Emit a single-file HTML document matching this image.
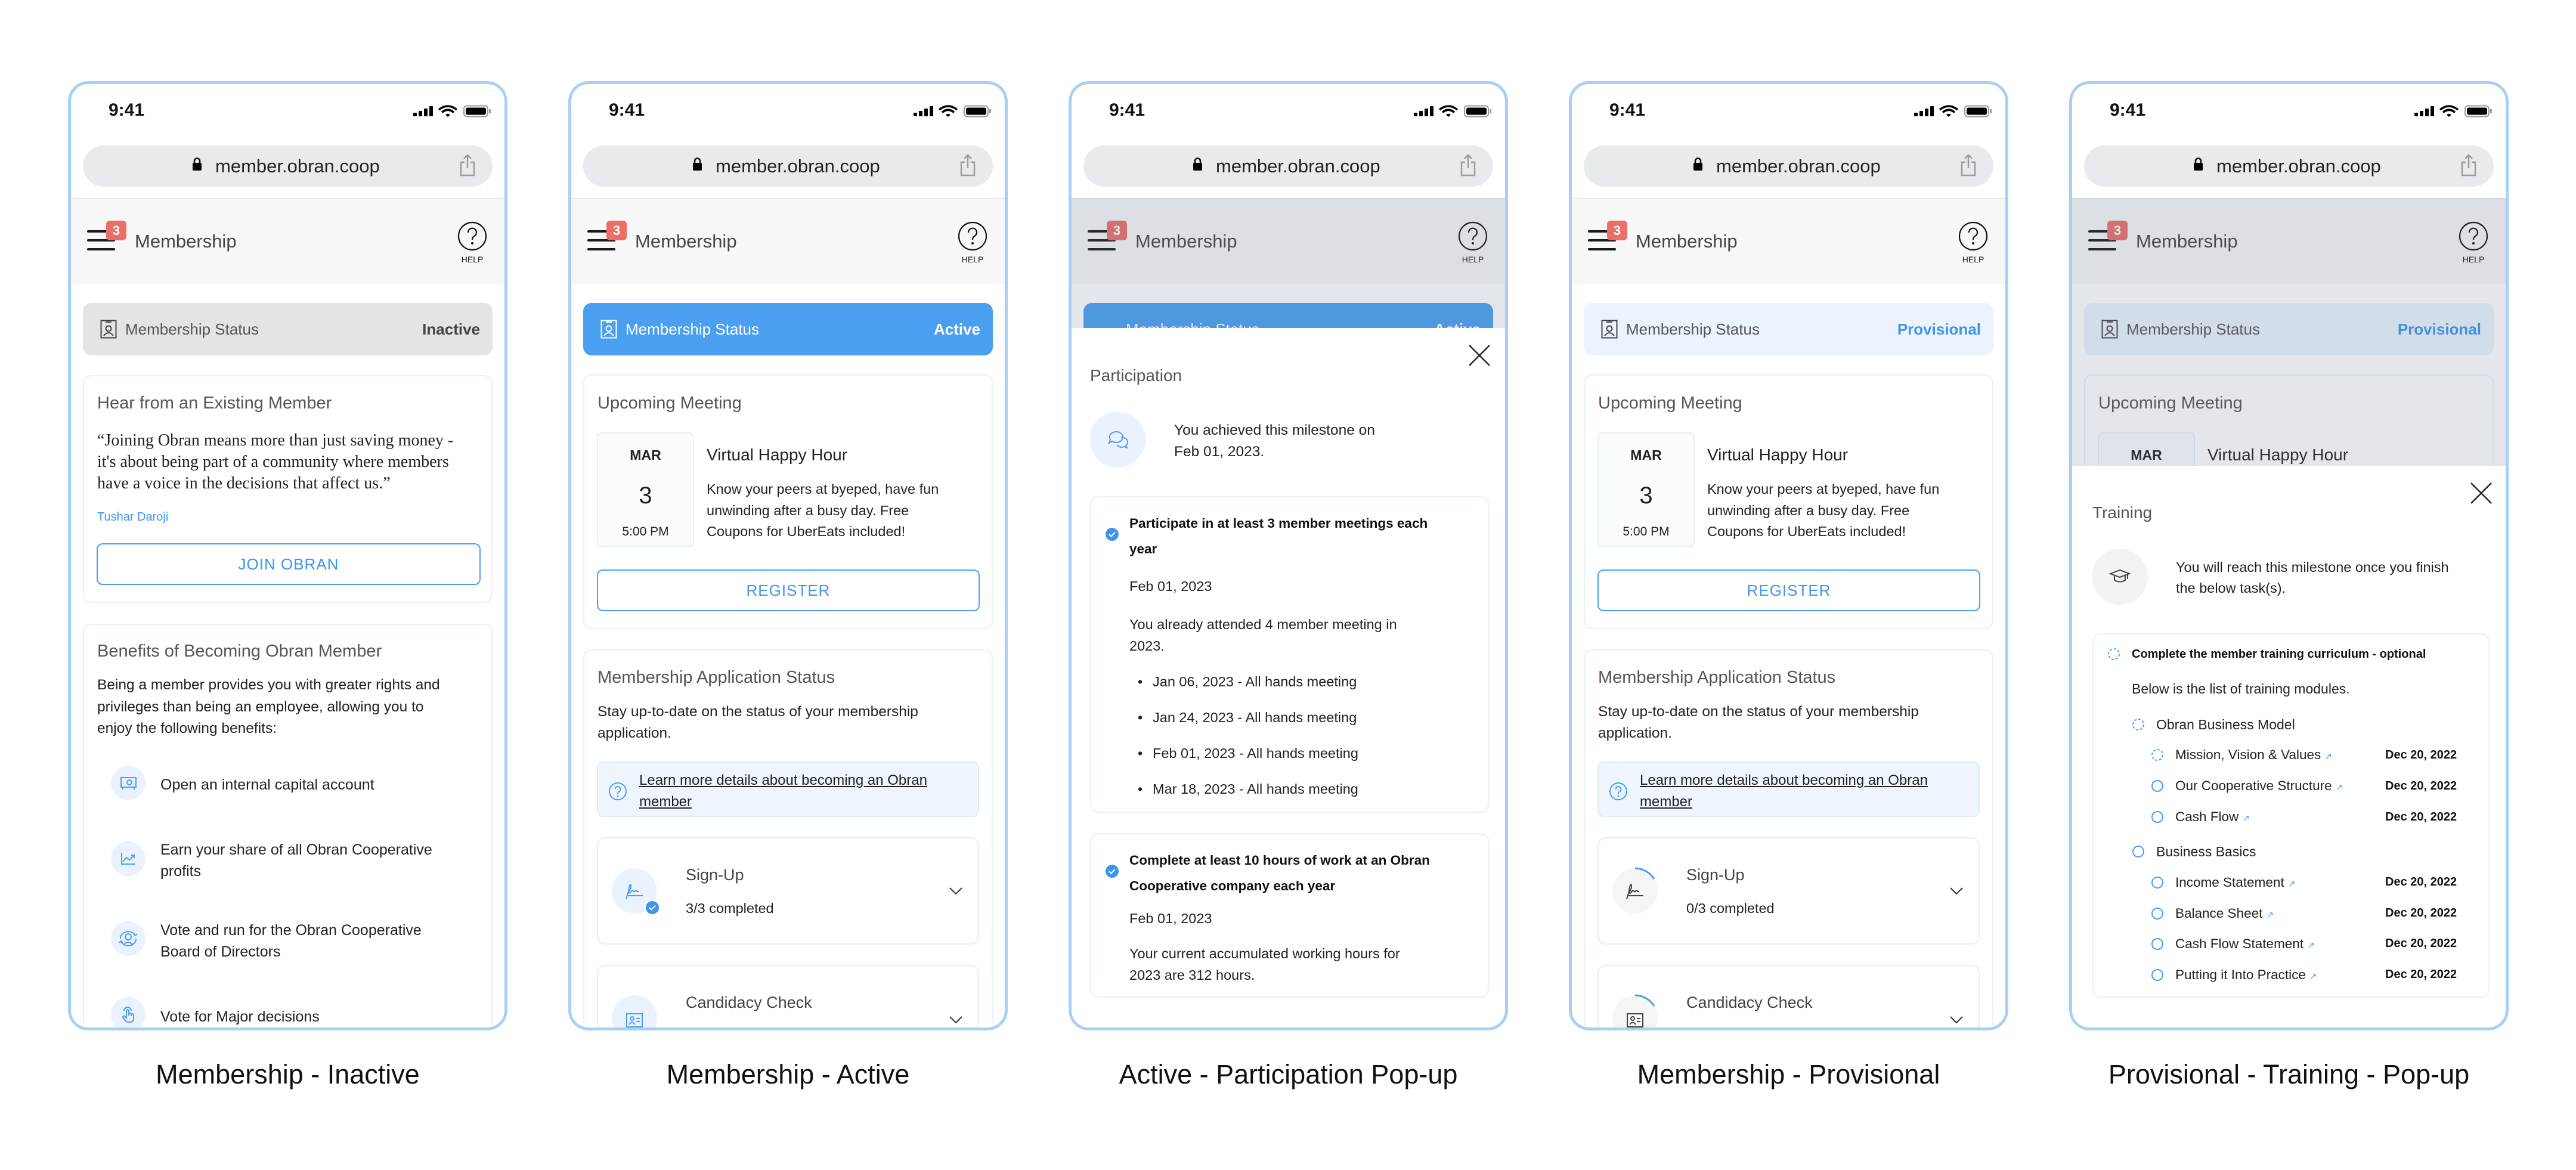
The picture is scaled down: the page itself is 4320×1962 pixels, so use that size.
<!DOCTYPE html>
<html><head><meta charset="utf-8"><style>
*{box-sizing:border-box;margin:0;padding:0}
html{width:4320px;height:1962px;overflow:hidden}
body{width:4320px;height:1962px;background:#fff;position:relative;overflow:hidden;font-family:"Liberation Sans",sans-serif;color:#222}
.ph{position:absolute;top:136px;width:737px;height:1592px;border-radius:34px;overflow:hidden;background:#fff}
.bd{position:absolute;left:0;top:0;width:737px;height:1592px;border:5px solid #a8cff5;border-radius:34px;z-index:50}
.a{position:absolute;white-space:nowrap}
.time{left:68px;top:31px;font-size:30px;line-height:36px;font-weight:bold;color:#111}
.sb{left:579px;top:40px}
.url{left:25px;top:108px;width:687px;height:69px;border-radius:35px;background:#e9eaed}
.urlt{left:247px;top:124px;font-size:31px;line-height:38px;color:#222}
.hdr{left:0;top:196px;width:737px;height:144px;background:#f7f7f7;border-top:2px solid #e8e8e8}
.hb{left:32px;width:47px;height:4px;background:#1a1a1a;border-radius:2px}
.badge{left:64px;top:234px;width:34px;height:33px;background:#ec6e69;border-radius:6px;color:#fff;font-size:22px;font-weight:bold;text-align:center;line-height:33px}
.mtitle{left:112px;top:249px;font-size:31px;line-height:40px;color:#444}
.help{left:653px;top:235px}
.helpt{left:650px;top:291px;width:56px;text-align:center;font-size:14px;line-height:16px;color:#111}
.stat{left:25px;top:372px;width:687px;height:88px;border-radius:14px}
.stt{left:96px;top:401px;font-size:26px;line-height:30px}
.stv{right:46px;top:401px;font-size:26px;line-height:30px;font-weight:bold}
.card{left:25px;width:687px;border:2px solid #e8f0fa;border-radius:14px;background:#fff}
.ct{left:49px;font-size:29px;line-height:36px;color:#555}
.body{font-size:25px;line-height:36px;color:#222}
.btn{left:48px;width:642px;height:70px;border:2px solid #4a9ff0;border-radius:10px;color:#3d95ec;font-size:26px;letter-spacing:1px;text-align:center;line-height:66px}
.ic{border-radius:50%;background:#eaf3fd}
.box{left:48px;width:641px;border:2px solid #e6eef9;border-radius:14px;background:#fff}
.lbl{top:1777px;font-size:45px;line-height:50px;color:#111;text-align:center;width:737px}
.ov{left:0;width:737px;background:rgba(100,120,150,0.18);z-index:20}
.pop{left:0;width:737px;background:#fff;z-index:30}
.b{font-weight:bold}
</style></head><body>

<!-- ================= FRAME 1 ================= -->
<div class="ph" style="left:114px">
<div class="a time">9:41</div>
<svg class="a sb" width="132" height="22" viewBox="0 0 132 22"><rect x="0" y="13" width="6" height="6" rx="1"/><rect x="9" y="10" width="6" height="9" rx="1"/><rect x="18" y="6" width="6" height="13" rx="1"/><rect x="27" y="2" width="6" height="17" rx="1"/><path d="M43 8 Q58 -4 73 8" stroke="#000" stroke-width="3.5" fill="none"/><path d="M48 12.5 Q58 4 68 12.5" stroke="#000" stroke-width="3.5" fill="none"/><path d="M54 16.5 L58 20 L62 16.5 Q58 13 54 16.5Z"/><rect x="85" y="1.5" width="40" height="18" rx="5" fill="none" stroke="#999" stroke-width="2"/><rect x="88" y="4.5" width="34" height="12" rx="3"/><rect x="127" y="7" width="3" height="7" rx="1" fill="#999"/></svg>
<div class="a url"></div>
<svg class="a" style="left:209px;top:128px" width="15" height="22" viewBox="0 0 15 22"><path d="M3 10 V6 a4.5 4.5 0 0 1 9 0 V10" stroke="#111" stroke-width="2.6" fill="none"/><rect x="0" y="9" width="15" height="13" rx="2"/></svg>
<div class="a urlt">member.obran.coop</div>
<svg class="a" style="left:656px;top:122px" width="28" height="38" viewBox="0 0 28 38"><path d="M9 14 H3 V36 H25 V14 H19 M14 24 V2 M8 8 L14 2 L20 8" stroke="#9a9ca0" stroke-width="2.5" fill="none"/></svg>
<div class="a hdr"></div>
<div class="a hb" style="top:250px"></div><div class="a hb" style="top:265px"></div><div class="a hb" style="top:280px"></div>
<div class="a badge">3</div>
<div class="a mtitle">Membership</div>
<svg class="a help" width="50" height="50" viewBox="0 0 50 50"><circle cx="25" cy="25" r="23" stroke="#111" stroke-width="2.2" fill="none"/><path d="M18 19 a7 7 0 1 1 10 6 q-3 2 -3 6" stroke="#111" stroke-width="2.2" fill="none"/><circle cx="25" cy="37" r="2" fill="#111"/></svg>
<div class="a helpt">HELP</div>
<div class="a stat" style="background:#e4e4e4"></div>
<svg class="a" style="left:54px;top:400px" width="28" height="32" viewBox="0 0 28 32"><rect x="1.5" y="1.5" width="25" height="29" stroke="#444" stroke-width="2" fill="none"/><path d="M9 4 H19" stroke="#444" stroke-width="2"/><circle cx="14" cy="15" r="4.5" stroke="#444" stroke-width="2" fill="none"/><path d="M6 27 Q14 17 22 27" stroke="#444" stroke-width="2" fill="none"/></svg>
<div class="a stt" style="color:#555">Membership Status</div>
<div class="a stv" style="color:#444">Inactive</div>

<div class="a card" style="top:493px;height:382px"></div>
<div class="a ct" style="top:522px">Hear from an Existing Member</div>
<div class="a" style="left:49px;top:585px;font-family:'Liberation Serif',serif;font-size:28px;line-height:36px;color:#222">“Joining Obran means more than just saving money -<br>it's about being part of a community where members<br>have a voice in the decisions that affect us.”</div>
<div class="a" style="left:49px;top:718px;font-size:20px;line-height:26px;color:#3d95ec">Tushar Daroji</div>
<div class="a btn" style="top:775px;width:644px">JOIN OBRAN</div>

<div class="a card" style="top:910px;height:760px"></div>
<div class="a ct" style="top:938px">Benefits of Becoming Obran Member</div>
<div class="a body" style="left:49px;top:995px;font-size:24.5px;line-height:36.5px">Being a member provides you with greater rights and<br>privileges than being an employee, allowing you to<br>enjoy the following benefits:</div>
<div class="a ic" style="left:72px;top:1148px;width:58px;height:58px"></div>
<svg class="a" style="left:88px;top:1167px" width="27" height="22" viewBox="0 0 27 22"><rect x="1" y="1" width="25" height="16" stroke="#4a9ff0" stroke-width="2" fill="none"/><circle cx="15" cy="9" r="4" stroke="#4a9ff0" stroke-width="2" fill="none"/><path d="M4 17 v4 M23 17 v4" stroke="#4a9ff0" stroke-width="2"/></svg>
<div class="a body" style="left:155px;top:1162px">Open an internal capital account</div>
<div class="a ic" style="left:72px;top:1275px;width:58px;height:58px"></div>
<svg class="a" style="left:88px;top:1293px" width="26" height="22" viewBox="0 0 26 22"><path d="M2 1 V20 H25 M4 16 L10 9 L15 13 L23 5 M18 5 H23 V10" stroke="#4a9ff0" stroke-width="2" fill="none"/></svg>
<div class="a body" style="left:155px;top:1271px">Earn your share of all Obran Cooperative<br>profits</div>
<div class="a ic" style="left:72px;top:1409px;width:58px;height:58px"></div>
<svg class="a" style="left:85px;top:1424px" width="32" height="28" viewBox="0 0 32 28"><circle cx="16" cy="11" r="5" stroke="#4a9ff0" stroke-width="2" fill="none"/><path d="M8 25 Q16 15 24 25 M3 14 A13 11 0 0 1 28 9 M29 14 A13 11 0 0 1 4 19 M25 6 l3 3 l3 -3 M1 21 l3 -3 l3 3" stroke="#4a9ff0" stroke-width="2" fill="none"/></svg>
<div class="a body" style="left:155px;top:1406px">Vote and run for the Obran Cooperative<br>Board of Directors</div>
<div class="a ic" style="left:72px;top:1536px;width:58px;height:58px"></div>
<svg class="a" style="left:89px;top:1552px" width="26" height="28" viewBox="0 0 26 28"><path d="M9 20 V7 a2 2 0 0 1 4 0 V15 M13 13 a2 2 0 0 1 4 0 V16 M17 14 a2 2 0 0 1 4 0 V20 Q21 26 15 26 H12 Q9 26 6 22 L3 18 a2 2 0 0 1 3 -2 L9 19 M5 7 a6 6 0 0 1 12 0" stroke="#4a9ff0" stroke-width="2" fill="none"/></svg>
<div class="a body" style="left:155px;top:1551px">Vote for Major decisions</div>
<div class="bd"></div>
</div>
<div class="a lbl" style="left:114px">Membership - Inactive</div>

<!-- ================= FRAME 2 ================= -->
<div class="ph" style="left:953px">
<div class="a time">9:41</div>
<svg class="a sb" width="132" height="22" viewBox="0 0 132 22"><rect x="0" y="13" width="6" height="6" rx="1"/><rect x="9" y="10" width="6" height="9" rx="1"/><rect x="18" y="6" width="6" height="13" rx="1"/><rect x="27" y="2" width="6" height="17" rx="1"/><path d="M43 8 Q58 -4 73 8" stroke="#000" stroke-width="3.5" fill="none"/><path d="M48 12.5 Q58 4 68 12.5" stroke="#000" stroke-width="3.5" fill="none"/><path d="M54 16.5 L58 20 L62 16.5 Q58 13 54 16.5Z"/><rect x="85" y="1.5" width="40" height="18" rx="5" fill="none" stroke="#999" stroke-width="2"/><rect x="88" y="4.5" width="34" height="12" rx="3"/><rect x="127" y="7" width="3" height="7" rx="1" fill="#999"/></svg>
<div class="a url"></div>
<svg class="a" style="left:209px;top:128px" width="15" height="22" viewBox="0 0 15 22"><path d="M3 10 V6 a4.5 4.5 0 0 1 9 0 V10" stroke="#111" stroke-width="2.6" fill="none"/><rect x="0" y="9" width="15" height="13" rx="2"/></svg>
<div class="a urlt">member.obran.coop</div>
<svg class="a" style="left:656px;top:122px" width="28" height="38" viewBox="0 0 28 38"><path d="M9 14 H3 V36 H25 V14 H19 M14 24 V2 M8 8 L14 2 L20 8" stroke="#9a9ca0" stroke-width="2.5" fill="none"/></svg>
<div class="a hdr"></div>
<div class="a hb" style="top:250px"></div><div class="a hb" style="top:265px"></div><div class="a hb" style="top:280px"></div>
<div class="a badge">3</div>
<div class="a mtitle">Membership</div>
<svg class="a help" width="50" height="50" viewBox="0 0 50 50"><circle cx="25" cy="25" r="23" stroke="#111" stroke-width="2.2" fill="none"/><path d="M18 19 a7 7 0 1 1 10 6 q-3 2 -3 6" stroke="#111" stroke-width="2.2" fill="none"/><circle cx="25" cy="37" r="2" fill="#111"/></svg>
<div class="a helpt">HELP</div>
<div class="a stat" style="background:#4a9ff0"></div>
<svg class="a" style="left:54px;top:400px" width="28" height="32" viewBox="0 0 28 32"><rect x="1.5" y="1.5" width="25" height="29" stroke="#fff" stroke-width="2" fill="none"/><path d="M9 4 H19" stroke="#fff" stroke-width="2"/><circle cx="14" cy="15" r="4.5" stroke="#fff" stroke-width="2" fill="none"/><path d="M6 27 Q14 17 22 27" stroke="#fff" stroke-width="2" fill="none"/></svg>
<div class="a stt" style="color:#fff">Membership Status</div>
<div class="a stv" style="color:#fff">Active</div>

<div class="a card" style="top:492px;height:427px"></div>
<div class="a ct" style="top:522px">Upcoming Meeting</div>
<div class="a" style="left:48px;top:589px;width:163px;height:192px;border:2px solid #e6eef8;border-radius:8px;background:#fafcfe"></div>
<div class="a b" style="left:48px;top:613px;width:163px;text-align:center;font-size:23px;line-height:28px">MAR</div>
<div class="a" style="left:48px;top:673px;width:163px;text-align:center;font-size:40px;line-height:44px">3</div>
<div class="a" style="left:48px;top:743px;width:163px;text-align:center;font-size:21px;line-height:26px">5:00 PM</div>
<div class="a" style="left:232px;top:609px;font-size:28px;line-height:36px;color:#222">Virtual Happy Hour</div>
<div class="a body" style="left:232px;top:667px;font-size:23.5px;line-height:35.5px">Know your peers at byeped, have fun<br>unwinding after a busy day. Free<br>Coupons for UberEats included!</div>
<div class="a btn" style="top:819px">REGISTER</div>

<div class="a card" style="top:953px;height:700px"></div>
<div class="a ct" style="top:982px">Membership Application Status</div>
<div class="a body" style="left:49px;top:1040px;font-size:24.5px">Stay up-to-date on the status of your membership<br>application.</div>
<div class="a" style="left:48px;top:1141px;width:641px;height:93px;border:2px solid #e0ebf8;border-radius:10px;background:#eef5fd"></div>
<svg class="a" style="left:67px;top:1175px" width="32" height="32" viewBox="0 0 32 32"><circle cx="16" cy="16" r="14" stroke="#4a9ff0" stroke-width="2" fill="none"/><path d="M11.5 12.5 a4.5 4.5 0 1 1 6.5 4 q-2 1 -2 4" stroke="#4a9ff0" stroke-width="2" fill="none"/><circle cx="16" cy="24" r="1.5" fill="#4a9ff0"/></svg>
<div class="a" style="left:119px;top:1155px;font-size:24px;line-height:36px;text-decoration:underline;color:#222">Learn more details about becoming an Obran<br>member</div>
<div class="a box" style="top:1268px;height:180px"></div>
<div class="a ic" style="left:73px;top:1320px;width:76px;height:76px"></div>
<svg class="a" style="left:93px;top:1340px" width="34" height="34" viewBox="0 0 34 34"><path d="M4 32 L8 18 Q10 4 12 8 Q13 14 8 20 Q8 23 11 21 Q14 16 16 18 Q17 21 19 18 Q21 16 22 19 L25 19 M5 26 H32" stroke="#4a9ff0" stroke-width="2" fill="none"/></svg>
<div class="a" style="left:128px;top:1373px;width:26px;height:26px;border-radius:50%;background:#3d95ec;border:2px solid #fff"></div>
<svg class="a" style="left:134px;top:1380px" width="14" height="12" viewBox="0 0 14 12"><path d="M2 6 L5.5 9.5 L12 2.5" stroke="#fff" stroke-width="2" fill="none"/></svg>
<div class="a" style="left:197px;top:1313px;font-size:27px;line-height:36px;color:#444">Sign-Up</div>
<div class="a" style="left:197px;top:1371px;font-size:23.5px;line-height:32px;color:#222">3/3 completed</div>
<svg class="a" style="left:638px;top:1351px" width="24" height="14" viewBox="0 0 24 14"><path d="M2 2 L12 12 L22 2" stroke="#333" stroke-width="2" fill="none"/></svg>
<div class="a box" style="top:1482px;height:160px"></div>
<div class="a ic" style="left:73px;top:1533px;width:76px;height:76px"></div>
<svg class="a" style="left:97px;top:1563px" width="28" height="24" viewBox="0 0 28 24"><rect x="1" y="1" width="26" height="22" stroke="#4a9ff0" stroke-width="2" fill="none"/><circle cx="10" cy="9" r="3" stroke="#4a9ff0" stroke-width="2" fill="none"/><path d="M5 19 Q10 12 15 19 M17 9 H23 M17 14 H23" stroke="#4a9ff0" stroke-width="2" fill="none"/></svg>
<div class="a" style="left:197px;top:1527px;font-size:27px;line-height:36px;color:#444">Candidacy Check</div>
<svg class="a" style="left:638px;top:1567px" width="24" height="14" viewBox="0 0 24 14"><path d="M2 2 L12 12 L22 2" stroke="#333" stroke-width="2" fill="none"/></svg>
<div class="bd"></div>
</div>
<div class="a lbl" style="left:953px">Membership - Active</div>

<!-- ================= FRAME 3 ================= -->
<div class="ph" style="left:1792px">
<div class="a time">9:41</div>
<svg class="a sb" width="132" height="22" viewBox="0 0 132 22"><rect x="0" y="13" width="6" height="6" rx="1"/><rect x="9" y="10" width="6" height="9" rx="1"/><rect x="18" y="6" width="6" height="13" rx="1"/><rect x="27" y="2" width="6" height="17" rx="1"/><path d="M43 8 Q58 -4 73 8" stroke="#000" stroke-width="3.5" fill="none"/><path d="M48 12.5 Q58 4 68 12.5" stroke="#000" stroke-width="3.5" fill="none"/><path d="M54 16.5 L58 20 L62 16.5 Q58 13 54 16.5Z"/><rect x="85" y="1.5" width="40" height="18" rx="5" fill="none" stroke="#999" stroke-width="2"/><rect x="88" y="4.5" width="34" height="12" rx="3"/><rect x="127" y="7" width="3" height="7" rx="1" fill="#999"/></svg>
<div class="a url"></div>
<svg class="a" style="left:209px;top:128px" width="15" height="22" viewBox="0 0 15 22"><path d="M3 10 V6 a4.5 4.5 0 0 1 9 0 V10" stroke="#111" stroke-width="2.6" fill="none"/><rect x="0" y="9" width="15" height="13" rx="2"/></svg>
<div class="a urlt">member.obran.coop</div>
<svg class="a" style="left:656px;top:122px" width="28" height="38" viewBox="0 0 28 38"><path d="M9 14 H3 V36 H25 V14 H19 M14 24 V2 M8 8 L14 2 L20 8" stroke="#9a9ca0" stroke-width="2.5" fill="none"/></svg>
<div class="a hdr"></div>
<div class="a hb" style="top:250px"></div><div class="a hb" style="top:265px"></div><div class="a hb" style="top:280px"></div>
<div class="a badge">3</div>
<div class="a mtitle">Membership</div>
<svg class="a help" width="50" height="50" viewBox="0 0 50 50"><circle cx="25" cy="25" r="23" stroke="#111" stroke-width="2.2" fill="none"/><path d="M18 19 a7 7 0 1 1 10 6 q-3 2 -3 6" stroke="#111" stroke-width="2.2" fill="none"/><circle cx="25" cy="37" r="2" fill="#111"/></svg>
<div class="a helpt">HELP</div>
<div class="a stat" style="background:#4a9ff0"></div>
<div class="a stt" style="color:#fff">Membership Status</div>
<div class="a stv" style="color:#fff">Active</div>
<div class="a ov" style="top:196px;height:218px"></div>
<div class="a pop" style="top:414px;height:1178px">
 <svg class="a" style="left:670px;top:27px" width="38" height="38" viewBox="0 0 38 38"><path d="M2 2 L36 36 M36 2 L2 36" stroke="#222" stroke-width="2.5"/></svg>
 <div class="a ct" style="left:36px;top:62px;font-size:28px">Participation</div>
 <div class="a ic" style="left:35px;top:140px;width:94px;height:94px"></div>
 <svg class="a" style="left:66px;top:172px" width="34" height="30" viewBox="0 0 34 30"><path d="M13 2 a11 9 0 1 1 -6 16 l-5 3 l2 -6 A11 9 0 0 1 13 2Z M22 12 a9 7.5 0 0 1 8 13 l2 4 l-5 -2 a9 7.5 0 0 1 -12 -3" stroke="#4a9ff0" stroke-width="2" fill="none"/></svg>
 <div class="a body" style="left:177px;top:154px;font-size:24.5px">You achieved this milestone on<br>Feb 01, 2023.</div>
 <div class="a card" style="left:36px;top:282px;width:669px;height:531px"></div>
 <svg class="a" style="left:62px;top:335px" width="22" height="22" viewBox="0 0 22 22"><circle cx="11" cy="11" r="11" fill="#3d95ec"/><path d="M6 11 L9.5 14.5 L16 7.5" stroke="#fff" stroke-width="2" fill="none"/></svg>
 <div class="a b" style="left:102px;top:306px;font-size:22.5px;line-height:43px;color:#111">Participate in at least 3 member meetings each<br>year</div>
 <div class="a body" style="left:102px;top:415px;font-size:23.5px;line-height:36px">Feb 01, 2023</div>
 <div class="a body" style="left:102px;top:479px;font-size:23.5px;line-height:36px">You already attended 4 member meeting in<br>2023.</div>
 <div class="a body" style="left:116px;top:563px;font-size:23.5px;line-height:60px">•<br>•<br>•<br>•</div>
 <div class="a body" style="left:141px;top:563px;font-size:23.5px;line-height:60px">Jan 06, 2023 - All hands meeting<br>Jan 24, 2023 - All hands meeting<br>Feb 01, 2023 - All hands meeting<br>Mar 18, 2023 - All hands meeting</div>
 <div class="a card" style="left:36px;top:847px;width:669px;height:276px"></div>
 <svg class="a" style="left:62px;top:900px" width="22" height="22" viewBox="0 0 22 22"><circle cx="11" cy="11" r="11" fill="#3d95ec"/><path d="M6 11 L9.5 14.5 L16 7.5" stroke="#fff" stroke-width="2" fill="none"/></svg>
 <div class="a b" style="left:102px;top:871px;font-size:22.5px;line-height:43px;color:#111">Complete at least 10 hours of work at an Obran<br>Cooperative company each year</div>
 <div class="a body" style="left:102px;top:972px;font-size:23.5px;line-height:36px">Feb 01, 2023</div>
 <div class="a body" style="left:102px;top:1031px;font-size:23.5px;line-height:36px">Your current accumulated working hours for<br>2023 are 312 hours.</div>
</div>
<div class="bd"></div>
</div>
<div class="a lbl" style="left:1792px">Active - Participation Pop-up</div>

<!-- ================= FRAME 4 ================= -->
<div class="ph" style="left:2631px">
<div class="a time">9:41</div>
<svg class="a sb" width="132" height="22" viewBox="0 0 132 22"><rect x="0" y="13" width="6" height="6" rx="1"/><rect x="9" y="10" width="6" height="9" rx="1"/><rect x="18" y="6" width="6" height="13" rx="1"/><rect x="27" y="2" width="6" height="17" rx="1"/><path d="M43 8 Q58 -4 73 8" stroke="#000" stroke-width="3.5" fill="none"/><path d="M48 12.5 Q58 4 68 12.5" stroke="#000" stroke-width="3.5" fill="none"/><path d="M54 16.5 L58 20 L62 16.5 Q58 13 54 16.5Z"/><rect x="85" y="1.5" width="40" height="18" rx="5" fill="none" stroke="#999" stroke-width="2"/><rect x="88" y="4.5" width="34" height="12" rx="3"/><rect x="127" y="7" width="3" height="7" rx="1" fill="#999"/></svg>
<div class="a url"></div>
<svg class="a" style="left:209px;top:128px" width="15" height="22" viewBox="0 0 15 22"><path d="M3 10 V6 a4.5 4.5 0 0 1 9 0 V10" stroke="#111" stroke-width="2.6" fill="none"/><rect x="0" y="9" width="15" height="13" rx="2"/></svg>
<div class="a urlt">member.obran.coop</div>
<svg class="a" style="left:656px;top:122px" width="28" height="38" viewBox="0 0 28 38"><path d="M9 14 H3 V36 H25 V14 H19 M14 24 V2 M8 8 L14 2 L20 8" stroke="#9a9ca0" stroke-width="2.5" fill="none"/></svg>
<div class="a hdr"></div>
<div class="a hb" style="top:250px"></div><div class="a hb" style="top:265px"></div><div class="a hb" style="top:280px"></div>
<div class="a badge">3</div>
<div class="a mtitle">Membership</div>
<svg class="a help" width="50" height="50" viewBox="0 0 50 50"><circle cx="25" cy="25" r="23" stroke="#111" stroke-width="2.2" fill="none"/><path d="M18 19 a7 7 0 1 1 10 6 q-3 2 -3 6" stroke="#111" stroke-width="2.2" fill="none"/><circle cx="25" cy="37" r="2" fill="#111"/></svg>
<div class="a helpt">HELP</div>
<div class="a stat" style="background:#ebf3fd"></div>
<svg class="a" style="left:54px;top:400px" width="28" height="32" viewBox="0 0 28 32"><rect x="1.5" y="1.5" width="25" height="29" stroke="#444" stroke-width="2" fill="none"/><path d="M9 4 H19" stroke="#444" stroke-width="2"/><circle cx="14" cy="15" r="4.5" stroke="#444" stroke-width="2" fill="none"/><path d="M6 27 Q14 17 22 27" stroke="#444" stroke-width="2" fill="none"/></svg>
<div class="a stt" style="color:#555">Membership Status</div>
<div class="a stv" style="color:#3d95ec">Provisional</div>

<div class="a card" style="top:492px;height:427px"></div>
<div class="a ct" style="top:522px">Upcoming Meeting</div>
<div class="a" style="left:48px;top:589px;width:163px;height:192px;border:2px solid #e6eef8;border-radius:8px;background:#fafcfe"></div>
<div class="a b" style="left:48px;top:613px;width:163px;text-align:center;font-size:23px;line-height:28px">MAR</div>
<div class="a" style="left:48px;top:673px;width:163px;text-align:center;font-size:40px;line-height:44px">3</div>
<div class="a" style="left:48px;top:743px;width:163px;text-align:center;font-size:21px;line-height:26px">5:00 PM</div>
<div class="a" style="left:232px;top:609px;font-size:28px;line-height:36px;color:#222">Virtual Happy Hour</div>
<div class="a body" style="left:232px;top:667px;font-size:23.5px;line-height:35.5px">Know your peers at byeped, have fun<br>unwinding after a busy day. Free<br>Coupons for UberEats included!</div>
<div class="a btn" style="top:819px">REGISTER</div>

<div class="a card" style="top:953px;height:700px"></div>
<div class="a ct" style="top:982px">Membership Application Status</div>
<div class="a body" style="left:49px;top:1040px;font-size:24.5px">Stay up-to-date on the status of your membership<br>application.</div>
<div class="a" style="left:48px;top:1141px;width:641px;height:93px;border:2px solid #e0ebf8;border-radius:10px;background:#eef5fd"></div>
<svg class="a" style="left:67px;top:1175px" width="32" height="32" viewBox="0 0 32 32"><circle cx="16" cy="16" r="14" stroke="#4a9ff0" stroke-width="2" fill="none"/><path d="M11.5 12.5 a4.5 4.5 0 1 1 6.5 4 q-2 1 -2 4" stroke="#4a9ff0" stroke-width="2" fill="none"/><circle cx="16" cy="24" r="1.5" fill="#4a9ff0"/></svg>
<div class="a" style="left:119px;top:1155px;font-size:24px;line-height:36px;text-decoration:underline;color:#222">Learn more details about becoming an Obran<br>member</div>
<div class="a box" style="top:1268px;height:180px"></div>
<svg class="a" style="left:71px;top:1318px" width="80" height="80" viewBox="0 0 80 80"><circle cx="40" cy="40" r="38" fill="#f5f5f5"/><path d="M40 2 A38 38 0 0 1 72 20" stroke="#4a9ff0" stroke-width="3" fill="none"/></svg>
<svg class="a" style="left:93px;top:1340px" width="34" height="34" viewBox="0 0 34 34"><path d="M4 32 L8 18 Q10 4 12 8 Q13 14 8 20 Q8 23 11 21 Q14 16 16 18 Q17 21 19 18 Q21 16 22 19 L25 19 M5 26 H32" stroke="#444" stroke-width="2" fill="none"/></svg>
<div class="a" style="left:197px;top:1313px;font-size:27px;line-height:36px;color:#444">Sign-Up</div>
<div class="a" style="left:197px;top:1371px;font-size:23.5px;line-height:32px;color:#222">0/3 completed</div>
<svg class="a" style="left:638px;top:1351px" width="24" height="14" viewBox="0 0 24 14"><path d="M2 2 L12 12 L22 2" stroke="#333" stroke-width="2" fill="none"/></svg>
<div class="a box" style="top:1482px;height:160px"></div>
<svg class="a" style="left:71px;top:1531px" width="80" height="80" viewBox="0 0 80 80"><circle cx="40" cy="40" r="38" fill="#f5f5f5"/><path d="M40 2 A38 38 0 0 1 72 20" stroke="#4a9ff0" stroke-width="3" fill="none"/></svg>
<svg class="a" style="left:97px;top:1563px" width="28" height="24" viewBox="0 0 28 24"><rect x="1" y="1" width="26" height="22" stroke="#444" stroke-width="2" fill="none"/><circle cx="10" cy="9" r="3" stroke="#444" stroke-width="2" fill="none"/><path d="M5 19 Q10 12 15 19 M17 9 H23 M17 14 H23" stroke="#444" stroke-width="2" fill="none"/></svg>
<div class="a" style="left:197px;top:1527px;font-size:27px;line-height:36px;color:#444">Candidacy Check</div>
<svg class="a" style="left:638px;top:1567px" width="24" height="14" viewBox="0 0 24 14"><path d="M2 2 L12 12 L22 2" stroke="#333" stroke-width="2" fill="none"/></svg>
<div class="bd"></div>
</div>
<div class="a lbl" style="left:2631px">Membership - Provisional</div>

<!-- ================= FRAME 5 ================= -->
<div class="ph" style="left:3470px">
<div class="a time">9:41</div>
<svg class="a sb" width="132" height="22" viewBox="0 0 132 22"><rect x="0" y="13" width="6" height="6" rx="1"/><rect x="9" y="10" width="6" height="9" rx="1"/><rect x="18" y="6" width="6" height="13" rx="1"/><rect x="27" y="2" width="6" height="17" rx="1"/><path d="M43 8 Q58 -4 73 8" stroke="#000" stroke-width="3.5" fill="none"/><path d="M48 12.5 Q58 4 68 12.5" stroke="#000" stroke-width="3.5" fill="none"/><path d="M54 16.5 L58 20 L62 16.5 Q58 13 54 16.5Z"/><rect x="85" y="1.5" width="40" height="18" rx="5" fill="none" stroke="#999" stroke-width="2"/><rect x="88" y="4.5" width="34" height="12" rx="3"/><rect x="127" y="7" width="3" height="7" rx="1" fill="#999"/></svg>
<div class="a url"></div>
<svg class="a" style="left:209px;top:128px" width="15" height="22" viewBox="0 0 15 22"><path d="M3 10 V6 a4.5 4.5 0 0 1 9 0 V10" stroke="#111" stroke-width="2.6" fill="none"/><rect x="0" y="9" width="15" height="13" rx="2"/></svg>
<div class="a urlt">member.obran.coop</div>
<svg class="a" style="left:656px;top:122px" width="28" height="38" viewBox="0 0 28 38"><path d="M9 14 H3 V36 H25 V14 H19 M14 24 V2 M8 8 L14 2 L20 8" stroke="#9a9ca0" stroke-width="2.5" fill="none"/></svg>
<div class="a hdr"></div>
<div class="a hb" style="top:250px"></div><div class="a hb" style="top:265px"></div><div class="a hb" style="top:280px"></div>
<div class="a badge">3</div>
<div class="a mtitle">Membership</div>
<svg class="a help" width="50" height="50" viewBox="0 0 50 50"><circle cx="25" cy="25" r="23" stroke="#111" stroke-width="2.2" fill="none"/><path d="M18 19 a7 7 0 1 1 10 6 q-3 2 -3 6" stroke="#111" stroke-width="2.2" fill="none"/><circle cx="25" cy="37" r="2" fill="#111"/></svg>
<div class="a helpt">HELP</div>
<div class="a stat" style="background:#ebf3fd"></div>
<svg class="a" style="left:54px;top:400px" width="28" height="32" viewBox="0 0 28 32"><rect x="1.5" y="1.5" width="25" height="29" stroke="#444" stroke-width="2" fill="none"/><path d="M9 4 H19" stroke="#444" stroke-width="2"/><circle cx="14" cy="15" r="4.5" stroke="#444" stroke-width="2" fill="none"/><path d="M6 27 Q14 17 22 27" stroke="#444" stroke-width="2" fill="none"/></svg>
<div class="a stt" style="color:#555">Membership Status</div>
<div class="a stv" style="color:#3d95ec">Provisional</div>
<div class="a card" style="top:492px;height:427px"></div>
<div class="a ct" style="top:522px">Upcoming Meeting</div>
<div class="a" style="left:48px;top:589px;width:163px;height:192px;border:2px solid #e6eef8;border-radius:8px;background:#fafcfe"></div>
<div class="a b" style="left:48px;top:613px;width:163px;text-align:center;font-size:23px;line-height:28px">MAR</div>
<div class="a" style="left:232px;top:609px;font-size:28px;line-height:36px;color:#222">Virtual Happy Hour</div>
<div class="a ov" style="top:196px;height:449px"></div>
<div class="a pop" style="top:645px;height:947px">
 <svg class="a" style="left:672px;top:27px" width="38" height="38" viewBox="0 0 38 38"><path d="M2 2 L36 36 M36 2 L2 36" stroke="#222" stroke-width="2.5"/></svg>
 <div class="a ct" style="left:39px;top:61px;font-size:28px">Training</div>
 <div class="a ic" style="left:38px;top:139px;width:94px;height:94px;background:#f3f3f3"></div>
 <svg class="a" style="left:67px;top:172px" width="36" height="28" viewBox="0 0 36 28"><path d="M2 9 L18 3 L34 9 L18 15Z M9 12 V20 Q18 25 27 20 V12 M31 10 V18" stroke="#444" stroke-width="2" fill="none"/></svg>
 <div class="a body" style="left:179px;top:153px;font-size:23.5px;line-height:35px">You will reach this milestone once you finish<br>the below task(s).</div>
 <div class="a card" style="left:39px;top:281px;width:666px;height:611px"></div>
 <svg class="a" style="left:64px;top:305px" width="22" height="22" viewBox="0 0 22 22"><circle cx="11" cy="11" r="9" stroke="#4a9ff0" stroke-width="2" stroke-dasharray="4 3" fill="none"/></svg>
 <div class="a b" style="left:105px;top:303px;font-size:20px;line-height:26px;color:#111">Complete the member training curriculum - optional</div>
 <div class="a body" style="left:105px;top:357px;font-size:23px;line-height:34px">Below is the list of training modules.</div>
 <svg class="a" style="left:105px;top:423px" width="22" height="22" viewBox="0 0 22 22"><circle cx="11" cy="11" r="9" stroke="#4a9ff0" stroke-width="2" stroke-dasharray="4 3" fill="none"/></svg>
 <div class="a body" style="left:146px;top:417px;font-size:23px;line-height:34px">Obran Business Model</div>
 <svg class="a" style="left:137px;top:474px" width="22" height="22" viewBox="0 0 22 22"><circle cx="11" cy="11" r="9" stroke="#4a9ff0" stroke-width="2" stroke-dasharray="4 3" fill="none"/></svg>
 <div class="a body" style="left:178px;top:468px;font-size:22.5px;line-height:34px">Mission, Vision &amp; Values <span style="color:#4a9ff0;font-size:15px">&#8599;</span></div>
 <svg class="a" style="left:137px;top:526px" width="22" height="22" viewBox="0 0 22 22"><circle cx="11" cy="11" r="9" stroke="#4a9ff0" stroke-width="2" fill="none"/></svg>
 <div class="a body" style="left:178px;top:520px;font-size:22.5px;line-height:34px">Our Cooperative Structure <span style="color:#4a9ff0;font-size:15px">&#8599;</span></div>
 <svg class="a" style="left:137px;top:578px" width="22" height="22" viewBox="0 0 22 22"><circle cx="11" cy="11" r="9" stroke="#4a9ff0" stroke-width="2" fill="none"/></svg>
 <div class="a body" style="left:178px;top:572px;font-size:22.5px;line-height:34px">Cash Flow <span style="color:#4a9ff0;font-size:15px">&#8599;</span></div>
 <svg class="a" style="left:105px;top:636px" width="22" height="22" viewBox="0 0 22 22"><circle cx="11" cy="11" r="9" stroke="#4a9ff0" stroke-width="2" fill="none"/></svg>
 <div class="a body" style="left:146px;top:630px;font-size:23px;line-height:34px">Business Basics</div>
 <svg class="a" style="left:137px;top:688px" width="22" height="22" viewBox="0 0 22 22"><circle cx="11" cy="11" r="9" stroke="#4a9ff0" stroke-width="2" fill="none"/></svg>
 <div class="a body" style="left:178px;top:682px;font-size:22.5px;line-height:34px">Income Statement <span style="color:#4a9ff0;font-size:15px">&#8599;</span></div>
 <svg class="a" style="left:137px;top:740px" width="22" height="22" viewBox="0 0 22 22"><circle cx="11" cy="11" r="9" stroke="#4a9ff0" stroke-width="2" fill="none"/></svg>
 <div class="a body" style="left:178px;top:734px;font-size:22.5px;line-height:34px">Balance Sheet <span style="color:#4a9ff0;font-size:15px">&#8599;</span></div>
 <svg class="a" style="left:137px;top:791px" width="22" height="22" viewBox="0 0 22 22"><circle cx="11" cy="11" r="9" stroke="#4a9ff0" stroke-width="2" fill="none"/></svg>
 <div class="a body" style="left:178px;top:785px;font-size:22.5px;line-height:34px">Cash Flow Statement <span style="color:#4a9ff0;font-size:15px">&#8599;</span></div>
 <svg class="a" style="left:137px;top:843px" width="22" height="22" viewBox="0 0 22 22"><circle cx="11" cy="11" r="9" stroke="#4a9ff0" stroke-width="2" fill="none"/></svg>
 <div class="a body" style="left:178px;top:837px;font-size:22.5px;line-height:34px">Putting it Into Practice <span style="color:#4a9ff0;font-size:15px">&#8599;</span></div>
 <div class="a b" style="left:530px;top:459px;font-size:20px;line-height:52px;color:#111">Dec 20, 2022<br>Dec 20, 2022<br>Dec 20, 2022</div>
 <div class="a b" style="left:530px;top:673px;font-size:20px;line-height:51.7px;color:#111">Dec 20, 2022<br>Dec 20, 2022<br>Dec 20, 2022<br>Dec 20, 2022</div>
</div>
<div class="bd"></div>
</div>
<div class="a lbl" style="left:3470px">Provisional - Training - Pop-up</div>

</body></html>
